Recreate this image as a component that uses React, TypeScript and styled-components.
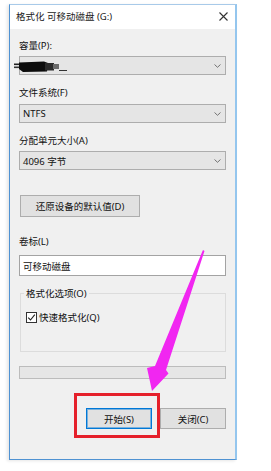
import styled, { createGlobalStyle } from "styled-components";

const GlobalStyle = createGlobalStyle`
    html, body {
        margin: 0;
        padding: 0;
        background: #fff;
    }
    body {
        font-family: "Noto Sans", "Noto Sans CJK SC", sans-serif;
        font-size: 9.5px;
        color: #111;
    }
`;

function App() {
    return (
        <Page>
            <GlobalStyle />
            <Window>
                <TitleBar>
                    <span>格式化 可移动磁盘 (G:)</span>
                    <svg width="9" height="9" viewBox="0 0 9 9">
                        <path d="M0.5 0.5 L8.5 8.5 M8.5 0.5 L0.5 8.5" stroke="#333" strokeWidth="1.1" />
                    </svg>
                </TitleBar>
                <Body>
                    <Label $top={0}>容量(P):</Label>
                    <Select $top={4}>
                        <span />
                        <Chevron />
                    </Select>
                    <Label $top={11}>文件系统(F)</Label>
                    <Select $top={5}>
                        <span>NTFS</span>
                        <Chevron />
                    </Select>
                    <Label $top={11}>分配单元大小(A)</Label>
                    <Select $top={4}>
                        <span>4096 字节</span>
                        <Chevron />
                    </Select>
                    <RestoreButton>还原设备的默认值(D)</RestoreButton>
                    <Label $top={18}>卷标(L)</Label>
                    <TextInput>可移动磁盘</TextInput>
                    <GroupBox>
                        <legend>格式化选项(O)</legend>
                        <CheckRow>
                            <CheckBox>
                                <svg width="9" height="9" viewBox="0 0 9 9">
                                    <path d="M1.2 4.6 L3.5 7 L7.8 1.6" fill="none" stroke="#222" strokeWidth="1.1" />
                                </svg>
                            </CheckBox>
                            快速格式化(Q)
                        </CheckRow>
                    </GroupBox>
                    <Progress />
                    <ButtonRow>
                        <DialogButton $primary>开始(S)</DialogButton>
                        <DialogButton>关闭(C)</DialogButton>
                    </ButtonRow>
                </Body>
            </Window>
            <Marks width="271" height="471" viewBox="0 0 271 471">
                {/* redacted capacity value */}
                <rect x="14" y="63.5" width="10" height="1.6" fill="#222" />
                <rect x="14" y="66.5" width="9" height="1.6" fill="#333" />
                <path d="M19 62.5 L44 61.5 L48 63 L47 71.5 L23 72 L19 69 Z" fill="#0c0c0c" />
                <rect x="45" y="63" width="9" height="7.5" fill="#2a2a2a" />
                <rect x="53" y="64" width="6" height="5" fill="#6a6a6a" />
                <rect x="59" y="70" width="8" height="1" fill="#333" />
                {/* annotation */}
                <rect x="75.5" y="394.5" width="83" height="42" fill="none" stroke="#e5202b" strokeWidth="3" />
                <polygon
                    points="203,250 204.5,251 166,370 168.5,373.5 152,391 147,368 155,366 202.5,251"
                    fill="#f126f1"
                />
            </Marks>
        </Page>
    );
}

const Chevron = () => (
    <svg width="7" height="4" viewBox="0 0 7 4">
        <path d="M0.5 0.5 L3.5 3.3 L6.5 0.5" fill="none" stroke="#666" strokeWidth="0.9" />
    </svg>
);

export default App;

const Page = styled.div`
    position: relative;
    width: 271px;
    height: 471px;
    padding: 4px 0 0 9px;
    box-sizing: border-box;
    overflow: hidden;
`;

const Window = styled.div`
    width: 228px;
    height: 456px;
    box-sizing: border-box;
    display: flex;
    flex-direction: column;
    background: #f0f0f0;
    border: 1px solid #4f92d2;
    border-top-color: #a8cae9;
    border-right: 2px solid #94c6ee;
    box-shadow: -2px 1px 3px rgba(0, 0, 0, 0.1);
`;

const TitleBar = styled.div`
    height: 24px;
    flex: none;
    display: flex;
    align-items: center;
    justify-content: space-between;
    padding: 0 7px 2px 6px;
    box-sizing: border-box;
    background: #fff;
    color: #1a1a1a;
`;

const Body = styled.div`
    display: flex;
    flex-direction: column;
    padding: 10px 9px 0 9px;
`;

const Label = styled.div<{ $top: number }>`
    line-height: 13px;
    height: 13px;
    margin-top: ${(p) => p.$top}px;
    white-space: nowrap;
`;

const Select = styled.div<{ $top: number }>`
    height: 19px;
    margin-top: ${(p) => p.$top}px;
    box-sizing: border-box;
    display: flex;
    align-items: center;
    justify-content: space-between;
    padding: 0 4px 0 3px;
    background: #e5e5e5;
    border: 1px solid #adadad;
`;

const RestoreButton = styled.div`
    width: 120px;
    height: 22px;
    margin: 25px 0 0 1px;
    box-sizing: border-box;
    display: flex;
    align-items: center;
    justify-content: center;
    background: #e1e1e1;
    border: 1px solid #adadad;
`;

const TextInput = styled.div`
    height: 21px;
    margin-top: 7px;
    box-sizing: border-box;
    display: flex;
    align-items: center;
    padding-left: 3px;
    background: #fff;
    border: 1px solid #a3a3a3;
`;

const GroupBox = styled.fieldset`
    width: 206px;
    height: 65px;
    margin: 11px 0 0 1px;
    padding: 0 5px;
    box-sizing: border-box;
    border: 1px solid #dcdcdc;

    legend {
        padding: 0 2px;
        margin-left: -2px;
        line-height: 13px;
    }
`;

const CheckRow = styled.div`
    display: flex;
    align-items: center;
    gap: 2px;
    margin-top: 11px;
    line-height: 13px;
`;

const CheckBox = styled.div`
    width: 11px;
    height: 11px;
    box-sizing: border-box;
    display: flex;
    align-items: center;
    justify-content: center;
    background: #fff;
    border: 1px solid #333;
`;

const Progress = styled.div`
    height: 13px;
    margin-top: 14px;
    box-sizing: border-box;
    background: #e6e6e6;
    border: 1px solid #bcbcbc;
`;

const ButtonRow = styled.div`
    display: flex;
    justify-content: flex-end;
    gap: 8px;
    margin-top: 29px;
`;

const DialogButton = styled.div<{ $primary?: boolean }>`
    width: 66px;
    height: 21px;
    box-sizing: border-box;
    display: flex;
    align-items: center;
    justify-content: center;
    background: #e1e1e1;
    border: 1px solid ${(p) => (p.$primary ? "#0078d7" : "#adadad")};
    box-shadow: ${(p) => (p.$primary ? "inset 0 0 0 1px rgba(0, 120, 215, 0.45)" : "none")};
`;

const Marks = styled.svg`
    position: absolute;
    left: 0;
    top: 0;
    pointer-events: none;
`;
